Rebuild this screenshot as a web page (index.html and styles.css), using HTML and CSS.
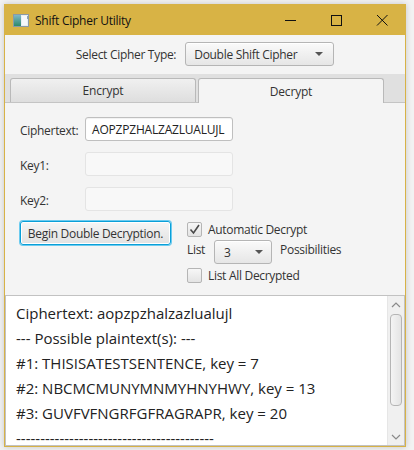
FILE: index.html
```html
<!DOCTYPE html>
<html>
<head>
<meta charset="utf-8">
<link rel="stylesheet" href="styles.css">
</head>
<body>
<div class="window">
  <div class="titlebar">
    <svg class="app-icon" width="16" height="13" viewBox="0 0 16 13">
      <defs>
        <linearGradient id="g1" x1="0" y1="0" x2="0" y2="1">
          <stop offset="0" stop-color="#7fb7c9"/>
          <stop offset="1" stop-color="#2f8a6a"/>
        </linearGradient>
      </defs>
      <rect x="0.5" y="0.5" width="15" height="12" fill="#e8eef2" stroke="#8a9aa6"/>
      <rect x="1" y="1" width="7" height="11" fill="url(#g1)"/>
      <rect x="9" y="2" width="5" height="9" fill="#f6f8fa"/>
      <rect x="14" y="2" width="1" height="3" fill="#8aa4b4"/>
    </svg>
    <span class="title">Shift Cipher Utility</span>
    <div class="controls">
      <div class="ctl"><svg width="12" height="12" viewBox="0 0 12 12"><path d="M1 6.5h11" stroke="#111" stroke-width="1"/></svg></div>
      <div class="ctl"><svg width="12" height="12" viewBox="0 0 12 12"><rect x="1.5" y="1.5" width="10" height="10" fill="none" stroke="#111" stroke-width="1"/></svg></div>
      <div class="ctl"><svg width="12" height="12" viewBox="0 0 12 12"><path d="M1 1L11.5 11.5M11.5 1L1 11.5" stroke="#111" stroke-width="1"/></svg></div>
    </div>
  </div>
  <div class="content">
    <div class="type-row">
      <span class="lbl">Select Cipher Type:</span>
      <div class="combo combo-type"><span>Double Shift Cipher</span><span class="arrow"></span></div>
    </div>
    <div class="tabs">
      <div class="tab">Encrypt</div>
      <div class="tab selected">Decrypt</div>
    </div>
    <div class="tab-body">
      <div class="form">
        <span class="lbl">Ciphertext:</span>
        <div class="field">AOPZPZHALZAZLUALUJL</div>
        <span class="lbl">Key1:</span>
        <div class="field disabled"></div>
        <span class="lbl">Key2:</span>
        <div class="field disabled"></div>
      </div>
      <div class="actions">
        <div class="button focused">Begin Double Decryption.</div>
        <div class="options">
          <div class="check-row"><span class="check checked"><svg width="13" height="13" viewBox="0 0 13 13"><path d="M2.5 6.5L5.5 10L11 2" fill="none" stroke="#4a4a4a" stroke-width="1.6"/></svg></span><span class="lbl">Automatic Decrypt</span></div>
          <div class="list-row"><span class="lbl">List</span><div class="combo combo-num"><span>3</span><span class="arrow"></span></div><span class="lbl">Possibilities</span></div>
          <div class="check-row"><span class="check"></span><span class="lbl">List All Decrypted</span></div>
        </div>
      </div>
    </div>
    <div class="output">
      <div class="out-text">
        <div>Ciphertext: aopzpzhalzazlualujl</div>
        <div>--- Possible plaintext(s): ---</div>
        <div>#1: THISISATESTSENTENCE, key = 7</div>
        <div>#2: NBCMCMUNYMNMYHNYHWY, key = 13</div>
        <div>#3: GUVFVFNGRFGFRAGRAPR, key = 20</div>
        <div>-----------------------------------------</div>
      </div>
      <div class="scrollbar">
        <div class="sb-btn"><svg width="10" height="6" viewBox="0 0 10 6"><path d="M1 5L5 1L9 5" fill="none" stroke="#8a8a8a" stroke-width="1.2"/></svg></div>
        <div class="sb-track"><div class="sb-thumb"></div></div>
        <div class="sb-btn"><svg width="10" height="6" viewBox="0 0 10 6"><path d="M1 1L5 5L9 1" fill="none" stroke="#8a8a8a" stroke-width="1.2"/></svg></div>
      </div>
    </div>
  </div>
</div>
</body>
</html>
```
FILE: styles.css
```css
* { box-sizing: border-box; }
html, body { margin: 0; padding: 0; }
body {
  background: #f2f2f2;
  width: 414px;
  height: 450px;
  overflow: hidden;
  font-family: "Open Sans", "Noto Sans", sans-serif;
  color: #333;
}
.window {
  margin: 4px 0 0 4px;
  width: 402px;
  height: 443px;
  border: 1px solid #d7b246;
  box-shadow: 0 0 6px rgba(0,0,0,0.18);
  display: flex;
  flex-direction: column;
  background: #f4f4f4;
}
.titlebar {
  height: 30px;
  background: #d8b345;
  display: flex;
  align-items: center;
  flex-shrink: 0;
}
.app-icon { margin-left: 8px; margin-top: 1px; }
.title {
  margin-left: 6px;
  font-size: 12px;
  color: #111;
  letter-spacing: -0.25px;
}
.controls { margin-left: auto; display: flex; height: 100%; }
.ctl {
  width: 46px;
  height: 100%;
  display: flex;
  align-items: center;
  justify-content: center;
}
.content { flex: 1; display: flex; flex-direction: column; min-height: 0; }
.lbl { font-size: 12px; color: #333; white-space: nowrap; letter-spacing: -0.3px; }
.type-row {
  display: flex;
  justify-content: center;
  align-items: center;
  gap: 9px;
  padding: 7px 0 8px;
}
.combo {
  height: 24px;
  border: 1px solid #b5b5b5;
  border-radius: 3px;
  background: linear-gradient(#fafafa, #e6e6e6);
  display: flex;
  align-items: center;
  font-size: 12px;
  color: #333;
  letter-spacing: -0.3px;
  box-shadow: inset 0 1px 0 #fff;
}
.combo-type { width: 149px; padding: 0 10px 0 8px; }
.combo .arrow {
  margin-left: auto;
  width: 0; height: 0;
  border-left: 4px solid transparent;
  border-right: 4px solid transparent;
  border-top: 4px solid #555;
}
.tabs {
  height: 29px;
  background: #e0e0e0;
  display: flex;
  align-items: flex-end;
  padding-left: 5px;
  gap: 2px;
  border-bottom: 1px solid #c4c4c4;
}
.tab {
  width: 186px;
  height: 24px;
  border: 1px solid #b9b9b9;
  border-bottom: none;
  border-radius: 3px 3px 0 0;
  background: linear-gradient(#f0f0f0, #dedede);
  font-size: 12px;
  letter-spacing: -0.2px;
  color: #333;
  display: flex;
  align-items: center;
  justify-content: center;
}
.tab.selected {
  background: #f4f4f4;
  height: 25px;
  margin-bottom: -1px;
}
.tab-body {
  padding: 14px 15px 0;
  height: 187px;
}
.form {
  display: grid;
  grid-template-columns: 65px 148px;
  row-gap: 11px;
  align-items: start;
}
.form .lbl { padding-top: 5px; }
.field {
  height: 24px;
  border: 1px solid #bfbfbf;
  border-radius: 3px;
  background: #fff;
  box-shadow: inset 0 1px 1px rgba(0,0,0,0.06);
  font-size: 12px;
  letter-spacing: -0.2px;
  padding: 0 6px;
  display: flex;
  align-items: center;
  color: #222;
  white-space: nowrap;
  overflow: hidden;
}
.field.disabled {
  background: #f8f8f8;
  border-color: #e4e4e4;
  box-shadow: none;
}
.actions {
  display: flex;
  margin-top: 10px;
  gap: 16px;
}
.button {
  width: 151px;
  height: 24px;
  border: 1px solid #0a9fd8;
  border-radius: 3px;
  background: linear-gradient(#f5f5f5, #e2e2e2);
  box-shadow: 0 0 0 1px #6ccbef, inset 0 0 0 1px #fff;
  font-size: 12px;
  letter-spacing: -0.3px;
  color: #333;
  display: flex;
  align-items: center;
  justify-content: center;
}
.options { display: flex; flex-direction: column; }
.check-row { display: flex; align-items: center; gap: 6px; height: 16px; }
.check {
  width: 15px; height: 15px;
  border: 1px solid #b5b5b5;
  border-radius: 2px;
  background: linear-gradient(#f7f7f7, #e3e3e3);
  display: flex; align-items: center; justify-content: center;
}
.list-row {
  display: flex;
  align-items: flex-start;
  margin-top: 2px;
  margin-bottom: 3px;
}
.list-row .lbl { line-height: 21px; }
.combo-num { width: 58px; height: 24px; margin: 1px 8px 0 9px; padding: 0 8px 0 9px; }
.output {
  flex: 1;
  margin-top: 5px;
  border: 1px solid #c2c2c2;
  background: #fff;
  display: flex;
  min-height: 0;
  overflow: hidden;
}
.out-text {
  flex: 1;
  padding: 0 0 0 10px;
  font-size: 15px;
  line-height: 25px;
  color: #222;
  margin-top: 5px;
  white-space: nowrap;
  overflow: hidden;
}
.scrollbar {
  width: 17px;
  background: #f0f0f0;
  border-left: 1px solid #e6e6e6;
  display: flex;
  flex-direction: column;
}
.sb-btn { height: 17px; display: flex; align-items: center; justify-content: center; }
.sb-track { flex: 1; padding: 1px 2px; }
.sb-thumb {
  height: 92px;
  border: 1px solid #b5b5b5;
  border-radius: 4px;
  background: linear-gradient(90deg, #f4f4f4, #e4e4e4);
}
```
